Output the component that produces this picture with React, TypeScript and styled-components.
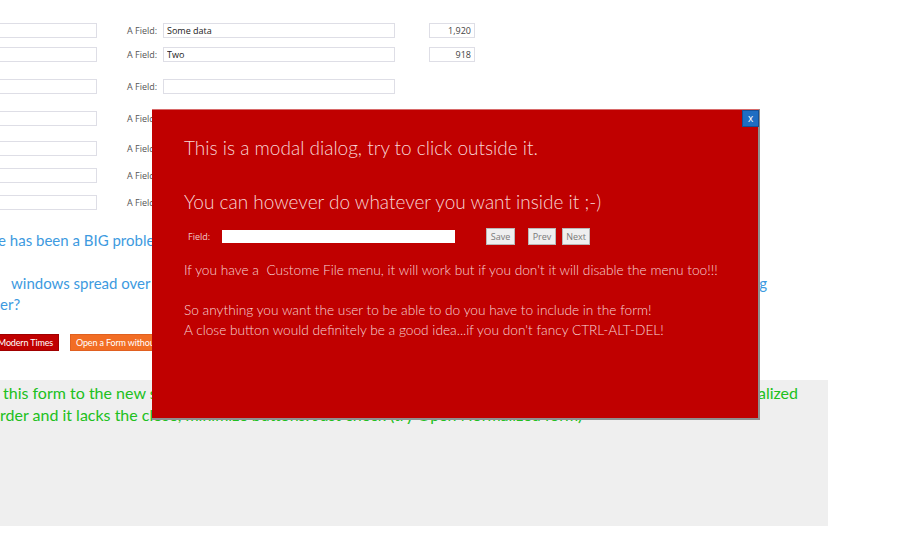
import styled, { createGlobalStyle } from "styled-components";

const GlobalStyle = createGlobalStyle`
  html, body {
    margin: 0;
    padding: 0;
    background: #fff;
    overflow: hidden;
  }
  body {
    font-family: Lato, "Open Sans", "Liberation Sans", sans-serif;
  }
`;

const Viewport = styled.div`
  position: relative;
  width: 900px;
  height: 536px;
  overflow: hidden;
`;

// the page is scrolled sideways, so the sheet starts left of the window
const Sheet = styled.div`
  width: 938px;
  margin-left: -110px;
  padding-top: 22px;
`;

const FormRow = styled.div<{ $gap: number }>`
  display: flex;
  align-items: center;
  height: 16px;
  margin-top: ${(p) => p.$gap}px;
`;

const SideLabel = styled.span`
  width: 56px;
  font-size: 9px;
  color: #555;
`;

const FieldLabel = styled.span`
  width: 36px;
  margin-left: 30px;
  font-size: 9px;
  color: #555;
  font-family: "Open Sans", Lato, sans-serif;
`;

const TextBox = styled.input<{ $w: number }>`
  width: ${(p) => p.$w}px;
  height: 15px;
  box-sizing: border-box;
  border: 1px solid #dedee6;
  background: #fff;
  padding: 0 3px;
  margin: 0;
  font-family: "Open Sans", Lato, sans-serif;
  font-size: 9px;
  color: #222;
  outline: none;
`;

const NumberBox = styled(TextBox)`
  margin-left: 34px;
  text-align: right;
  color: #444;
`;

const BlueText = styled.div<{ $gap: number }>`
  margin-top: ${(p) => p.$gap}px;
  font-size: 15px;
  line-height: 21px;
  color: #3d9ae0;
`;

const GreenText = styled.div`
  font-size: 16px;
  line-height: 22px;
  color: #20c020;
`;

const Line = styled.div`
  white-space: nowrap;
`;

// a wrapped line whose start and end are both in view: the two halves
// are pinned to the line's ends, the middle sits under the dialog
const SplitLine = styled.div<{ $w: number }>`
  display: flex;
  justify-content: space-between;
  width: ${(p) => p.$w}px;
  white-space: pre;
`;

// text before the left edge of the window, right aligned to a fixed point
const Prefix = styled.span<{ $w: number }>`
  display: inline-flex;
  justify-content: flex-end;
  width: ${(p) => p.$w}px;
  white-space: pre;
`;

const ButtonRow = styled.div`
  display: grid;
  grid-template-columns: 169px auto;
  column-gap: 11px;
  align-items: center;
  margin-top: 19px;
  height: 17px;
`;

const ActionButton = styled.button<{ $tone: "red" | "orange" }>`
  justify-self: ${(p) => (p.$tone === "red" ? "end" : "start")};
  height: 17px;
  padding: 0 5px;
  border: 1px solid ${(p) => (p.$tone === "red" ? "#a00000" : "#e06020")};
  background: ${(p) => (p.$tone === "red" ? "#c00000" : "#f26d24")};
  color: #fff;
  font-family: Lato, "Open Sans", sans-serif;
  font-size: 9px;
  letter-spacing: -0.15px;
  line-height: 15px;
  white-space: nowrap;
`;

const GrayPanel = styled.div`
  margin-top: 29px;
  height: 146px;
  box-sizing: border-box;
  padding-top: 2px;
  background: #efefef;
`;

const Modal = styled.div`
  position: absolute;
  left: 152px;
  top: 109px;
  width: 608px;
  height: 311px;
  box-sizing: border-box;
  background: #c00000;
  border-top: 1px solid #d86a6a;
  border-right: 2px solid #8f8f8f;
  border-bottom: 2px solid #8f8f8f;
  padding: 26px 0 0 32px;
  color: #f7d6d6;
  font-family: Lato, "Open Sans", sans-serif;
  font-weight: 300;
`;

const CloseButton = styled.button`
  position: absolute;
  top: 0;
  right: -1px;
  width: 17px;
  height: 17px;
  padding: 0;
  border: 1px solid #174f94;
  background: #1f6dc2;
  color: #fff;
  font-family: "Open Sans", sans-serif;
  font-size: 10px;
  line-height: 13px;
`;

const Heading = styled.p<{ $gap: number }>`
  margin: ${(p) => p.$gap}px 0 0;
  font-size: 19px;
  line-height: 24px;
  white-space: nowrap;
`;

const FieldRow = styled.div`
  display: flex;
  align-items: center;
  height: 17px;
  margin-top: 14px;
  padding-left: 4px;
`;

const ModalLabel = styled.span`
  width: 34px;
  font-family: "Open Sans", Lato, sans-serif;
  font-weight: 400;
  font-size: 9px;
  color: #f0c8c8;
`;

const ModalInput = styled.input`
  width: 233px;
  height: 13px;
  box-sizing: border-box;
  border: none;
  margin: 0;
  padding: 0 3px;
  background: #fff;
  outline: none;
`;

const SmallButton = styled.button<{ $gap: number; $w: number }>`
  width: ${(p) => p.$w}px;
  height: 17px;
  margin-left: ${(p) => p.$gap}px;
  padding: 0;
  border: 1px solid #b8b8b8;
  background: #efefef;
  color: #7a7a7a;
  font-family: "Open Sans", Lato, sans-serif;
  font-size: 9px;
`;

const Body = styled.p`
  margin: 15px 0 0;
  font-size: 13.7px;
  line-height: 20px;
  white-space: nowrap;
`;

const rows = [
  { gap: 0, value: "Some data", num: "1,920" },
  { gap: 8, value: "Two", num: "918" },
  { gap: 16, value: "" },
  { gap: 16, value: "" },
  { gap: 14, value: "" },
  { gap: 11, value: "" },
  { gap: 11, value: "" },
];

export default function App() {
  return (
    <Viewport>
      <GlobalStyle />
      <Sheet>
        {rows.map((row, i) => (
          <FormRow key={i} $gap={row.gap}>
            <SideLabel>A Field:</SideLabel>
            <TextBox $w={151} readOnly />
            <FieldLabel>A Field:</FieldLabel>
            <TextBox $w={232} defaultValue={row.value} readOnly />
            {row.num && <NumberBox $w={46} defaultValue={row.num} readOnly />}
          </FormRow>
        ))}

        <BlueText $gap={20}>
          <Line>
            <Prefix $w={116}>For years the modal dialogue</Prefix> has been a BIG problem for
            web applications.
          </Line>
        </BlueText>
        <BlueText $gap={22}>
          <SplitLine $w={877}>
            <span>
              <Prefix $w={121}>{"Have you ever had   "}</Prefix>windows spread over your screen,
              and then been left
            </span>
            <span>wondering which one of them is waiting</span>
          </SplitLine>
          <Line>
            <Prefix $w={110}>for each oth</Prefix>er?
          </Line>
        </BlueText>

        <ButtonRow>
          <ActionButton $tone="red">Open a Form in Modern Times</ActionButton>
          <ActionButton $tone="orange">Open a Form without border</ActionButton>
        </ButtonRow>

        <GrayPanel>
          <GreenText>
            <SplitLine $w={908}>
              <span>
                <Prefix $w={113}>{"You can change "}</Prefix>this form to the new style by opening
              </span>
              <span>it in a separate window, shown as normalized</span>
            </SplitLine>
            <Line>
              <Prefix $w={110}>without bo</Prefix>rder and it lacks the close, minimize
              buttons. Just check (try Open Normalized form)
            </Line>
          </GreenText>
        </GrayPanel>
      </Sheet>

      <Modal>
        <CloseButton>x</CloseButton>
        <Heading $gap={0}>This is a modal dialog, try to click outside it.</Heading>
        <Heading $gap={30}>You can however do whatever you want inside it ;-)</Heading>
        <FieldRow>
          <ModalLabel>Field:</ModalLabel>
          <ModalInput readOnly />
          <SmallButton $gap={31} $w={29}>Save</SmallButton>
          <SmallButton $gap={13} $w={28}>Prev</SmallButton>
          <SmallButton $gap={6} $w={28}>Next</SmallButton>
        </FieldRow>
        <Body>
          If you have a&nbsp; Custome File menu, it will work but if you don't it will disable
          the menu too!!!
          <br />
          <br />
          So anything you want the user to be able to do you have to include in the form!
          <br />
          A close button would definitely be a good idea...if you don't fancy CTRL-ALT-DEL!
        </Body>
      </Modal>
    </Viewport>
  );
}
